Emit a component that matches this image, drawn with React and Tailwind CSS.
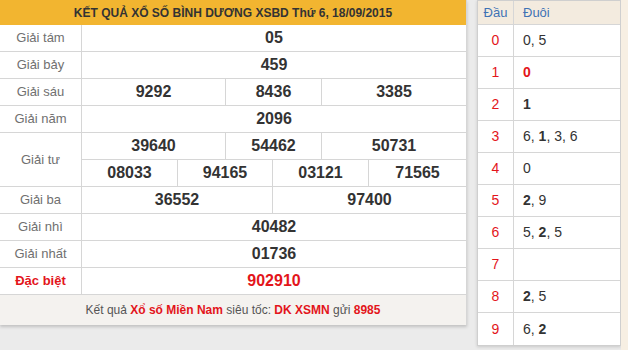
const FONT = { fontFamily: '"Liberation Sans", Arial, sans-serif' };

const Cell = ({ w, children, last, red }) => (
  <div
    className={`flex items-center justify-center h-full text-[16px] font-bold ${red ? "text-[#e3151b]" : "text-[#333]"} ${last ? "" : "border-r border-[#d6d6d6]"}`}
    style={w ? { width: w } : { flex: 1 }}
  >
    {children}
  </div>
);

const Row = ({ label, red, children, h = "h-[27px]" }) => (
  <div className={`flex ${h} border-b border-[#d6d6d6]`}>
    <div
      className={`w-[82px] shrink-0 flex items-center justify-center border-r border-[#d6d6d6] text-[13px] ${red ? "text-[#e3151b] font-bold" : "text-[#707070]"}`}
    >
      {label}
    </div>
    <div className="flex-1 flex flex-col">{children}</div>
  </div>
);

const LOTO = [
  ["0", [["0"], ["5"]]],
  ["1", [["0", "red"]]],
  ["2", [["1", "b"]]],
  ["3", [["6"], ["1", "b"], ["3"], ["6"]]],
  ["4", [["0"]]],
  ["5", [["2", "b"], ["9"]]],
  ["6", [["5"], ["2", "b"], ["5"]]],
  ["7", []],
  ["8", [["2", "b"], ["5"]]],
  ["9", [["6"], ["2", "b"]]],
];

export default function App() {
  return (
    <div className="w-[628px] h-[350px] bg-[#ebebeb] flex overflow-hidden" style={FONT}>
      <div className="w-[467px] shrink-0 self-start bg-white border-r border-[#d6d6d6] shadow-[0_2px_3px_rgba(0,0,0,0.18)]">
        <div className="h-[25px] bg-[#f2b530] flex items-center justify-center text-[12px] font-bold text-[#333]">
          KẾT QUẢ XỔ SỐ BÌNH DƯƠNG XSBD Thứ 6, 18/09/2015
        </div>
        <Row label="Giải tám">
          <div className="flex h-full"><Cell last>05</Cell></div>
        </Row>
        <Row label="Giải bảy">
          <div className="flex h-full"><Cell last>459</Cell></div>
        </Row>
        <Row label="Giải sáu">
          <div className="flex h-full">
            <Cell w={144}>9292</Cell>
            <Cell w={96}>8436</Cell>
            <Cell last>3385</Cell>
          </div>
        </Row>
        <Row label="Giải năm">
          <div className="flex h-full"><Cell last>2096</Cell></div>
        </Row>
        <Row label="Giải tư" h="h-[54px]">
          <div className="flex h-[27px] border-b border-[#d6d6d6]">
            <Cell w={144}>39640</Cell>
            <Cell w={96}>54462</Cell>
            <Cell last>50731</Cell>
          </div>
          <div className="flex flex-1">
            <Cell w={96}>08033</Cell>
            <Cell w={95}>94165</Cell>
            <Cell w={96}>03121</Cell>
            <Cell last>71565</Cell>
          </div>
        </Row>
        <Row label="Giải ba">
          <div className="flex h-full">
            <Cell w={191}>36552</Cell>
            <Cell last>97400</Cell>
          </div>
        </Row>
        <Row label="Giải nhì">
          <div className="flex h-full"><Cell last>40482</Cell></div>
        </Row>
        <Row label="Giải nhất">
          <div className="flex h-full"><Cell last>01736</Cell></div>
        </Row>
        <Row label="Đặc biệt" red>
          <div className="flex h-full"><Cell last red>902910</Cell></div>
        </Row>
        <div className="h-[30px] bg-[#f4f2ef] flex items-center justify-center text-[12px] text-[#555]">
          <p>
            Kết quả <span className="text-[#e3151b] font-bold">Xổ số Miền Nam</span> siêu tốc:{" "}
            <span className="text-[#e3151b] font-bold">DK XSMN</span> gửi{" "}
            <span className="text-[#e3151b] font-semibold">8985</span>
          </p>
        </div>
      </div>

      <div className="w-[10px] shrink-0" />

      <div className="w-[144px] shrink-0 self-start bg-white border border-[#cfcfcf] shadow-[0_1px_3px_rgba(0,0,0,0.15)]">
        <div className="flex h-[24px] bg-[#f3ebdf] border-b border-[#d6d6d6] text-[13px] text-[#3f72b5]">
          <div className="w-[36px] flex items-center justify-center border-r border-[#d6d6d6]">Đầu</div>
          <div className="flex-1 flex items-center pl-[9px]">Đuôi</div>
        </div>
        {LOTO.map(([d, tails], i) => (
          <div
            key={d}
            className={`flex h-[32px] text-[14px] ${i < LOTO.length - 1 ? "border-b border-[#d6d6d6]" : ""}`}
          >
            <div className="w-[36px] flex items-center justify-center border-r border-[#d6d6d6] text-[#e3151b]">{d}</div>
            <div className="flex-1 flex items-center pl-[9px] text-[#333]">
              <p>
                {tails.map(([t, s], j) => (
                  <span key={j}>
                    <span className={s === "red" ? "text-[#e3151b] font-semibold" : s === "b" ? "font-bold" : ""}>{t}</span>
                    {j < tails.length - 1 ? ", " : ""}
                  </span>
                ))}
              </p>
            </div>
          </div>
        ))}
      </div>

      <div className="flex-1 bg-[#f7efe3]" />
    </div>
  );
}
